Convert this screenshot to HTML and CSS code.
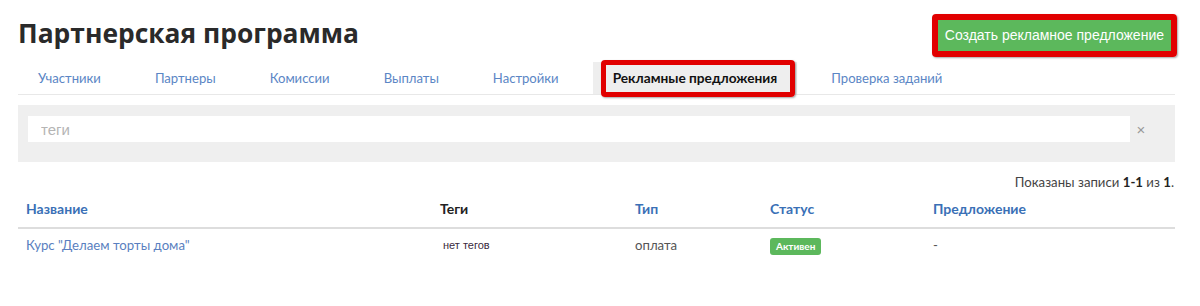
FILE: index.html
```html
<!DOCTYPE html>
<html lang="ru">
<head>
<meta charset="utf-8">
<title>Партнерская программа</title>
<link rel="stylesheet" href="styles.css">
</head>
<body>
<div class="page">
  <div class="header">
    <h1 class="title">Партнерская программа</h1>
    <div class="mark">
      <a class="btn-create" href="#">Создать рекламное предложение</a>
    </div>
  </div>
  <ul class="tabs">
    <li class="tab"><a href="#">Участники</a></li>
    <li class="tab"><a href="#">Партнеры</a></li>
    <li class="tab"><a href="#">Комиссии</a></li>
    <li class="tab"><a href="#">Выплаты</a></li>
    <li class="tab"><a href="#">Настройки</a></li>
    <li class="tab active"><a href="#">Рекламные предложения</a></li>
    <li class="tab"><a href="#">Проверка заданий</a></li>
  </ul>
  <div class="filter">
    <input class="filter-input" type="text" placeholder="теги">
    <span class="filter-clear">×</span>
  </div>
  <div class="summary">Показаны записи <b>1-1</b> из <b>1</b>.</div>
  <table class="grid">
    <thead>
      <tr>
        <th class="c1"><a href="#">Название</a></th>
        <th class="c2">Теги</th>
        <th class="c3"><a href="#">Тип</a></th>
        <th class="c4"><a href="#">Статус</a></th>
        <th class="c5"><a href="#">Предложение</a></th>
      </tr>
    </thead>
    <tbody>
      <tr>
        <td><a class="row-link" href="#">Курс "Делаем торты дома"</a></td>
        <td><span class="no-tags">нет тегов</span></td>
        <td class="muted">оплата</td>
        <td><span class="badge">Активен</span></td>
        <td class="muted">-</td>
      </tr>
    </tbody>
  </table>
</div>
</body>
</html>
```
FILE: styles.css
```css
* { box-sizing: border-box; }
html, body { margin: 0; padding: 0; background: #fff; }
body {
  font-family: Lato, "Open Sans", "Liberation Sans", sans-serif;
  font-size: 13.2px;
  color: #333;
}
a { text-decoration: none; }

.page { padding: 12px 25px 0 18px; }

.header {
  display: flex;
  justify-content: space-between;
  align-items: flex-start;
}
.title {
  margin: 4px 0 0;
  font-family: "Open Sans", Lato, sans-serif;
  font-size: 26.4px;
  line-height: 34px;
  font-weight: 700;
  color: #2a2a2a;
}
.mark {
  border: 6px solid #e10000;
  border-radius: 4px;
  margin-right: -2px;
  margin-top: 2px;
  box-shadow: 1px 1px 2px rgba(0,0,0,0.35);
}
.btn-create {
  display: block;
  background: #5cb85c;
  color: #fff;
  font-family: "Liberation Sans", Arial, sans-serif;
  font-size: 14px;
  line-height: 31px;
  padding: 0 7px;
}

.tabs {
  list-style: none;
  margin: 5px 0 0;
  padding: 0;
  display: flex;
  border-bottom: 1px solid #e8e8e8;
}
.tab {
  margin-right: 14px;
}
.tab a {
  display: block;
  padding: 0 20px;
  line-height: 32px;
  color: #5b86c5;
  font-size: 13.1px;
}
.tab.active {
  position: relative;
  background: #eee;
}
.tab.active a {
  color: #111;
  font-weight: 700;
  font-size: 13.7px;
}
.tab.active::after {
  content: "";
  position: absolute;
  left: 8px;
  right: 2px;
  top: -2px;
  bottom: -3px;
  border: 5px solid #e10000;
  border-radius: 4px;
  box-shadow: 1px 1px 2px rgba(0,0,0,0.35);
  pointer-events: none;
}

.filter {
  margin-top: 10px;
  background: #efefef;
  padding: 11px 23px 20px 10px;
  display: flex;
  align-items: center;
}
.filter-input {
  flex: 1;
  height: 26px;
  border: 0;
  background: #fff;
  padding: 0 13px;
  font-family: "Liberation Sans", Arial, sans-serif;
  font-size: 15px;
  color: #333;
  outline: none;
}
.filter-input::placeholder { color: #b5b5b5; }
.filter-clear {
  width: 22px;
  text-align: center;
  color: #999;
  font-family: "Liberation Sans", Arial, sans-serif;
  font-size: 15px;
}

.summary {
  margin-top: 10px;
  text-align: right;
  line-height: 20px;
  color: #444;
  padding-right: 1px;
}
.summary b { color: #222; }

.grid {
  width: 100%;
  border-collapse: collapse;
  table-layout: fixed;
}
.grid th, .grid td {
  text-align: left;
  padding: 8px 8px;
  line-height: 20px;
  vertical-align: middle;
}
.grid th {
  font-weight: 700;
  font-size: 14px;
  color: #222;
  border-bottom: 2px solid #ddd;
  padding-top: 7px;
}
.grid th a { color: #3a70b6; }
.c1 { width: 414px; }
.c2 { width: 195px; }
.c3 { width: 135px; }
.c4 { width: 163px; }
.grid td { padding-top: 5px; }
.row-link { color: #5a7fc0; }
.no-tags {
  font-family: "Liberation Sans", Arial, sans-serif;
  font-size: 11px;
  color: #3a2a40;
  padding-left: 3px;
}
.muted { color: #555; }
.badge {
  display: inline-block;
  background: #5cb85c;
  color: #fff;
  font-weight: 700;
  font-size: 10px;
  line-height: 13px;
  padding: 2px 6px;
  border-radius: 3px;
}
```
